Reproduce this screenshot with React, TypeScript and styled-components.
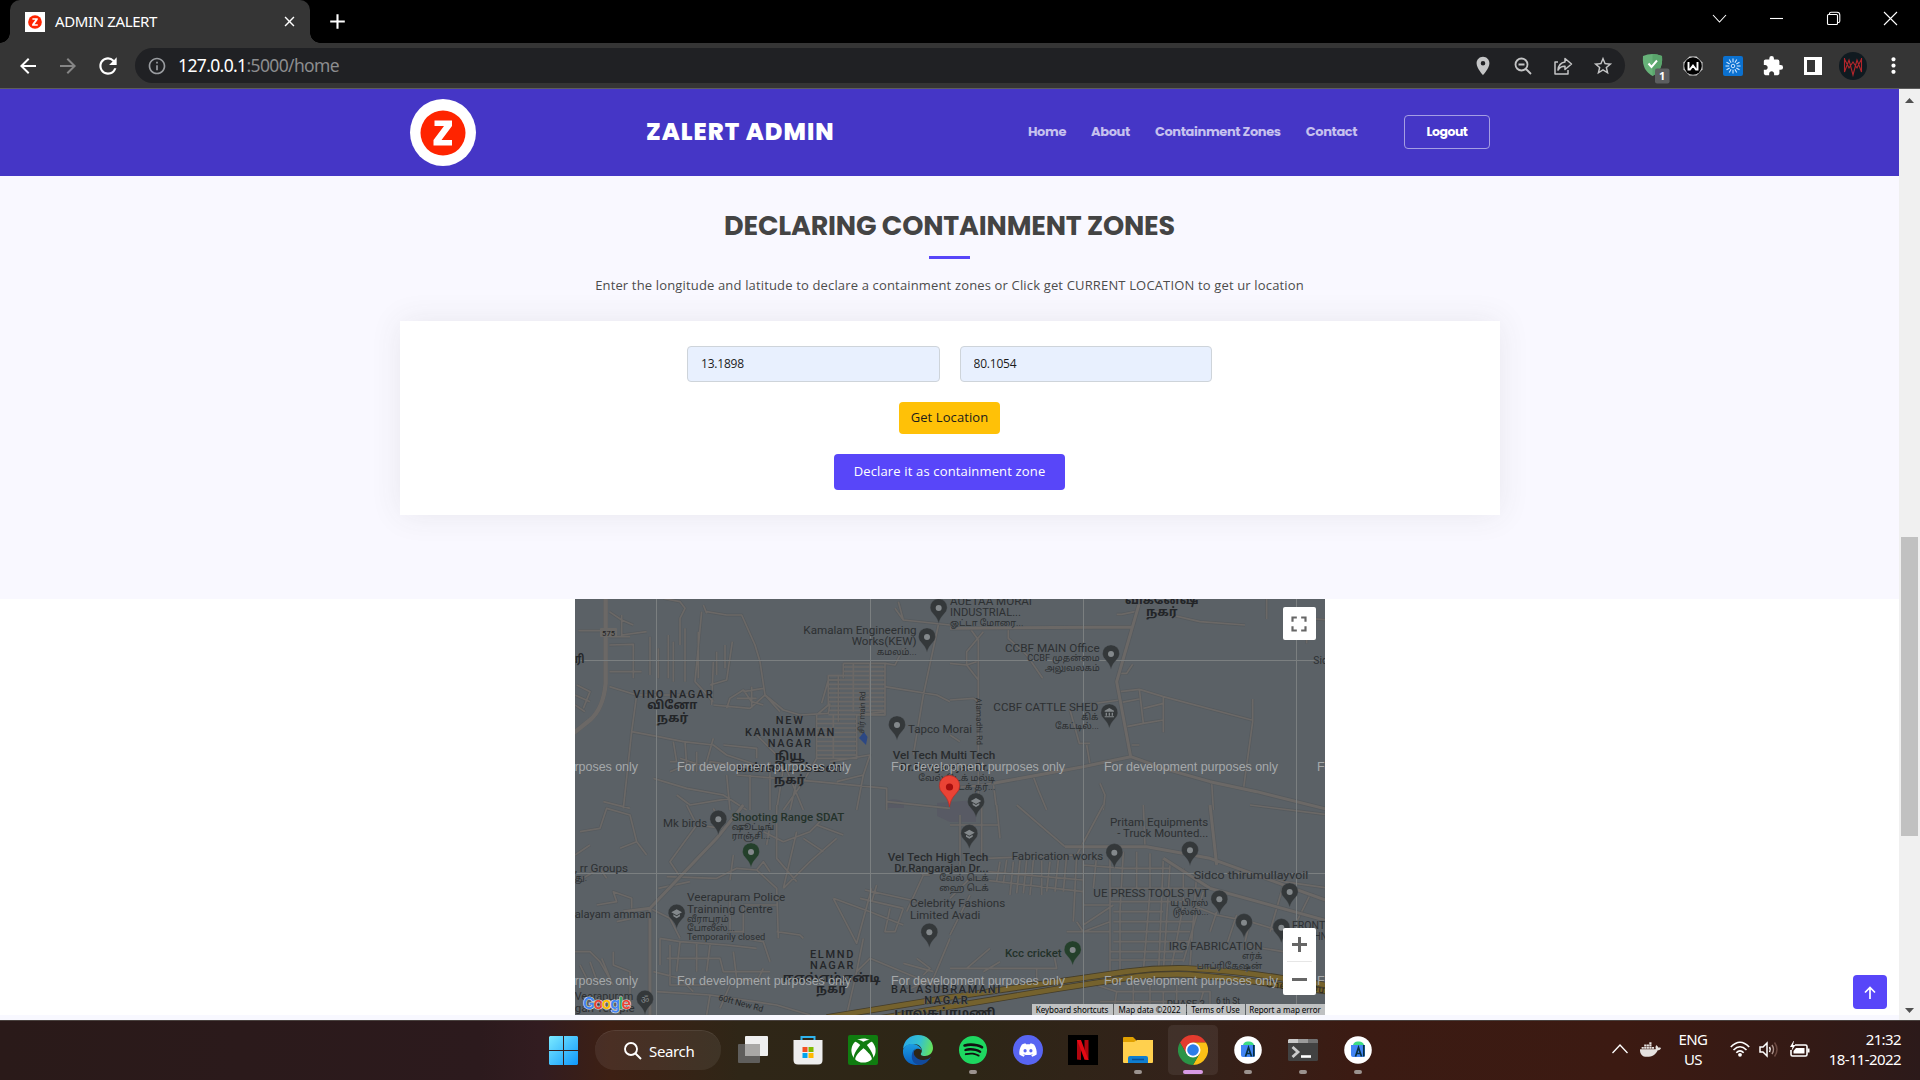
import React from "react";
import styled, { createGlobalStyle } from "styled-components";
import {
  MdArrowBack,
  MdArrowForward,
  MdRefresh,
  MdInfoOutline,
  MdLocationOn,
  MdStarBorder,
  MdExtension,
  MdMoreVert,
  MdClose,
  MdAdd,
  MdFullscreen,
} from "react-icons/md";
import { FaSpotify, FaDiscord, FaXbox, FaDocker } from "react-icons/fa";

const ui = `"Segoe UI", "Noto Sans", "Open Sans", sans-serif`;
const heading = `Poppins, Inter, "Liberation Sans", sans-serif`;
const body = `"Open Sans", "Noto Sans", sans-serif`;

const GlobalStyle = createGlobalStyle`
  * { box-sizing: border-box; }
  body { margin: 0; background: #000; overflow: hidden; }
  button { font: inherit; border: 0; padding: 0; margin: 0; background: none; }
  svg { display: block; flex: none; }
`;

const Screen = styled.div`
  width: 1920px;
  height: 1080px;
  display: flex;
  flex-direction: column;
  font-family: ${ui};
`;

/* ---------- browser chrome ---------- */

const TabStrip = styled.div`
  height: 43px;
  flex: none;
  display: flex;
  background: #000;
  color: #fff;
`;

const Tab = styled.div`
  position: relative;
  width: 300px;
  margin-left: 10px;
  padding: 0 12px 0 15px;
  display: flex;
  align-items: center;
  background: #353535;
  border-radius: 10px 10px 0 0;
  &::before,
  &::after {
    content: "";
    position: absolute;
    bottom: 0;
    width: 10px;
    height: 10px;
  }
  &::before {
    left: -10px;
    background: radial-gradient(circle at 0 0, transparent 9.5px, #353535 10px);
  }
  &::after {
    right: -10px;
    background: radial-gradient(circle at 100% 0, transparent 9.5px, #353535 10px);
  }
`;

const Favicon = styled.div`
  width: 20px;
  height: 20px;
  margin-right: 10px;
  background: #fff;
  display: grid;
  place-items: center;
`;

const TabTitle = styled.span`
  flex: 1;
  font-size: 15px;
  letter-spacing: -0.38px;
  line-height: 20px;
  padding-bottom: 2px;
`;

const NewTab = styled.div`
  width: 24px;
  margin-left: 15px;
  display: grid;
  place-items: center;
`;

const WindowControls = styled.div`
  margin-left: auto;
  margin-right: 1px;
  display: flex;
  height: 37px;
`;

const WinButton = styled.div`
  width: 57px;
  display: grid;
  place-items: center;
`;

const Toolbar = styled.div`
  height: 46px;
  flex: none;
  display: flex;
  align-items: center;
  background: #353535;
  border-bottom: 1px solid #5d5d5d;
  color: #fff;
`;

const NavButtons = styled.div`
  width: 135px;
  padding-left: 7.5px;
  display: flex;
`;

const ToolButton = styled.div<{ $dim?: boolean }>`
  width: 40px;
  height: 40px;
  display: grid;
  place-items: center;
  color: ${(p) => (p.$dim ? "#868686" : "#fff")};
`;

const Omnibox = styled.div`
  width: 1490px;
  height: 35px;
  border-radius: 18px;
  background: #202124;
  display: flex;
  align-items: center;
  padding: 0 2px 0 12px;
  color: #9a9da1;
`;

const Url = styled.span`
  flex: 1;
  padding-left: 11px;
  padding-bottom: 1px;
  font-size: 17.5px;
  line-height: 24px;
  letter-spacing: -0.63px;
  color: #8c8d8f;
  b {
    font-weight: 400;
    color: #fff;
  }
`;

const OmniIcon = styled.div`
  width: 40px;
  display: grid;
  place-items: center;
  color: #c4c5c6;
`;

const Extensions = styled.div`
  display: flex;
  margin-left: 8px;
`;

const Avatar = styled.div`
  width: 28px;
  height: 28px;
  border-radius: 50%;
  background: #101a20;
  display: grid;
  place-items: center;
`;

/* ---------- page ---------- */

const Viewport = styled.div`
  height: 931px;
  flex: none;
  display: flex;
  background: #fff;
`;

const Page = styled.div`
  width: 1899px;
  height: 931px;
  position: relative;
  display: flex;
  flex-direction: column;
`;

const Scrollbar = styled.div`
  width: 21px;
  background: #f0f0f0;
  display: flex;
  flex-direction: column;
  align-items: center;
  padding: 9px 0 7px;
`;

const Thumb = styled.div`
  width: 17px;
  height: 299px;
  margin-top: 434px;
  margin-bottom: auto;
  background: #c1c1c1;
`;

const Header = styled.header`
  height: 87px;
  flex: none;
  padding: 0 409px 2px 410px;
  display: flex;
  align-items: center;
  background: #4536c6;
  font-family: ${heading};
  font-weight: 600;
`;

const Logo = styled.div`
  width: 66px;
  height: 67px;
  margin-top: 2px;
  border-radius: 50%;
  background: #fff;
  display: grid;
  place-items: center;
`;

const Brand = styled.h1`
  margin: 0 0 0 170px;
  width: 382px;
  font-size: 24px;
  line-height: 30px;
  font-weight: 800;
  letter-spacing: 1px;
  white-space: nowrap;
  color: #fff;
`;

const Nav = styled.nav`
  display: flex;
  flex: 1;
  gap: 25px;
  font-size: 13px;
  line-height: 20px;
  font-weight: 700;
  letter-spacing: -0.38px;
  white-space: nowrap;
  color: #c6c1ee;
`;

const Logout = styled.button`
  width: 86px;
  height: 34px;
  border: 1px solid #a59ee3;
  border-radius: 4px;
  color: #fff;
  font-size: 12.5px;
  font-weight: 700;
  letter-spacing: -0.5px;
`;

const Declare = styled.section`
  height: 423px;
  flex: none;
  background: #f9f8ff;
  display: flex;
  flex-direction: column;
  align-items: center;
`;

const Title = styled.h2`
  margin: 33px 0 0;
  font-family: ${heading};
  font-size: 27px;
  line-height: 34px;
  font-weight: 700;
  letter-spacing: -0.2px;
  color: #444;
  white-space: nowrap;
`;

const Rule = styled.div`
  width: 41px;
  height: 3px;
  margin: 13px 0 16px;
  background: #5846f9;
`;

const Lead = styled.p`
  margin: 0;
  font-family: ${body};
  font-size: 13px;
  line-height: 20px;
  letter-spacing: 0.155px;
  color: #4c4c4c;
  white-space: nowrap;
`;

const Card = styled.form`
  width: 1100px;
  height: 194px;
  margin-top: 26px;
  padding-top: 25px;
  display: flex;
  flex-direction: column;
  align-items: center;
  gap: 20px;
  background: #fff;
  box-shadow: 0 0 30px rgba(68, 68, 68, 0.09);
  font-family: ${body};
`;

const Fields = styled.div`
  display: flex;
  gap: 20px;
`;

const Field = styled.input`
  width: 252.5px;
  height: 36px;
  padding: 0 13px 2px;
  border: 1px solid #ced4da;
  border-radius: 4px;
  background: #e8f0fe;
  font: 12px ${body};
  letter-spacing: -0.2px;
  color: #1c1c1c;
`;

const Button = styled.button<{ $primary?: boolean }>`
  width: ${(p) => (p.$primary ? 231 : 101)}px;
  height: ${(p) => (p.$primary ? 36 : 32)}px;
  padding-bottom: 2px;
  border-radius: 4px;
  background: ${(p) => (p.$primary ? "#5846f9" : "#ffc107")};
  color: ${(p) => (p.$primary ? "#fff" : "#1c1c1c")};
  font-size: 13px;
  letter-spacing: ${(p) => (p.$primary ? 0.15 : 0.1)}px;
  white-space: nowrap;
`;

const MapBand = styled.div`
  height: 416px;
  display: flex;
  justify-content: center;
`;

const MapFrame = styled.div`
  position: relative;
  width: 750px;
  height: 416px;
  overflow: hidden;
  background: #5b6166;
`;

const MapControl = styled.div<{ $top: number; $height: number }>`
  position: absolute;
  right: 9px;
  top: ${(p) => p.$top}px;
  width: 33px;
  height: ${(p) => p.$height}px;
  border-radius: 2px;
  background: #fff;
  color: #666;
  display: flex;
  flex-direction: column;
  align-items: center;
  justify-content: center;
  gap: 9.5px;
`;

const Divider = styled.i`
  width: 25px;
  height: 1px;
  background: #e6e6e6;
`;

const Legal = styled.div`
  position: absolute;
  right: 0;
  bottom: 0;
  height: 11px;
  display: flex;
  gap: 1px;
  font: 8px/11px "Noto Sans", sans-serif;
  color: #000;
`;

const LegalItem = styled.span<{ $w: number }>`
  width: ${(p) => p.$w}px;
  text-align: center;
  white-space: nowrap;
  letter-spacing: -0.04px;
  background: #bfc1c2;
`;

const Footer = styled.div`
  height: 5px;
  background: #f8f8ff;
`;

const BackToTop = styled.button`
  position: absolute;
  right: 12px;
  bottom: 11px;
  width: 34px;
  height: 34px;
  border-radius: 4px;
  background: #5846f9;
  display: grid;
  place-items: center;
`;

/* ---------- taskbar ---------- */

const Taskbar = styled.footer`
  height: 60px;
  flex: none;
  display: flex;
  align-items: center;
  padding-left: 549px;
  color: #fff;
  border-top: 1px solid #49413e;
  background: linear-gradient(
    90deg,
    #2a1a19 0,
    #2c1a1d 480px,
    #321c20 540px,
    #3d2014 610px,
    #2f2617 740px,
    #2d2616 960px,
    #33221a 1180px,
    #3b1b13 1350px,
    #3c1a12 1620px,
    #341a15 1800px,
    #2c1a1a 1920px
  );
`;

const SearchPill = styled.div`
  width: 126px;
  height: 40px;
  margin: 0 7px 1px 17px;
  border-radius: 20px;
  background: rgba(255, 255, 255, 0.07);
  border-top: 1px solid rgba(255, 255, 255, 0.08);
  display: flex;
  align-items: center;
  padding-left: 29px;
  gap: 7px;
  font-size: 15px;
  letter-spacing: -0.35px;
`;

const Apps = styled.div`
  display: flex;
  gap: 5px;
  padding-bottom: 1px;
`;

const AppTile = styled.div<{ $active?: boolean }>`
  width: 50px;
  height: 50px;
  border-radius: 5px;
  display: flex;
  flex-direction: column;
  align-items: center;
  padding-top: 10px;
  background: ${(p) => (p.$active ? "rgba(255,255,255,0.07)" : "transparent")};
`;

const Indicator = styled.i<{ $active?: boolean }>`
  width: ${(p) => (p.$active ? 20 : 8)}px;
  height: 4px;
  margin-top: 5px;
  border-radius: 2px;
  background: ${(p) => (p.$active ? "#d79be5" : "#9b938f")};
`;

const Tray = styled.div`
  margin-left: auto;
  display: flex;
  align-items: center;
  padding: 0 19px 3px 0;
  font-size: 15px;
  line-height: 20px;
  letter-spacing: -0.6px;
`;

const TraySlot = styled.div<{ $w: number; $end?: boolean }>`
  width: ${(p) => p.$w}px;
  display: flex;
  flex-direction: column;
  align-items: ${(p) => (p.$end ? "flex-end" : "center")};
  white-space: nowrap;
`;

/* ---------- map drawing ---------- */

const ROAD = "#6b6866";

type Quad = "a" | "b" | "c" | "d";
const origin: Record<Quad, string> = {
  a: "translate(570 595) scale(.33333)",
  b: "translate(950 595) scale(.33333)",
  c: "translate(570 805) scale(.33333)",
  d: "translate(950 805) scale(.33333)",
};

const majorRoads: Record<Quad, string> = {
  a: "M107 0V265Q100 340 60 375L10 415",
  b: "M575 0L500 260L542 485L400 515L130 565M542 485L640 520L780 560L920 590L1140 645M0 100L548 96",
  c: "M0 0M240 630L240 310L330 215L440 100L520 0M240 310L160 320",
  d: "M0 0M345 125H590L780 160L1140 290M640 160L780 250L1140 350M780 0L800 180",
};

const minorRoads: Record<Quad, string> = {
  a: `M25 107H90M118 50L155 75L190 90M155 60V120L230 110M118 125H180M118 150L190 148V250M118 230H215M240 125V240M265 160V250M295 120V250
      M310 140V260M345 100V260M385 110V250M330 70V150M330 70L345 40L330 20L280 10M410 50L470 60H515L555 150L570 200L585 300L630 350
      M395 50L375 260L430 320M400 30L410 55M487 140L470 255L420 270M440 170V240M465 150V220M118 275L200 300H380M200 300L185 410L160 640
      M185 410L265 425L340 440L430 450L470 480L560 510M310 440L320 500H300M345 440L350 510L300 530M430 430L410 500M430 200L425 330
      M430 330L540 340L585 300M470 340L480 310L520 285L545 320L580 330M500 310H560M520 290L580 280M545 275V340M585 300L640 345L690 360L775 355L780 325
      M755 325L775 255H805M820 205H945V360H865M775 240V330L740 360V490H860V360L945 350M820 205V250M805 240V380M945 205L975 210L1000 160
      M975 40L1000 75L1140 90M1000 75L985 20M945 275L1100 300L1140 320M1105 90L1060 300L1030 480M330 490L420 520V500L520 515M250 550L350 580L460 600L530 645
      M320 600L360 630L480 610M460 450L560 460V490M560 420L640 500L700 645M500 540L740 560M600 500V645M640 520L620 645M680 560L660 645
      M740 490L700 560L640 645M780 500L900 480L880 540L800 560M880 540L860 645M740 560L950 580V645M950 620L1140 640M20 270L60 290L40 340
      M15 300L60 320M15 330L45 350M180 640L100 620M470 540L480 645M540 540V645M380 470V530`,
  b: `M0 205L50 210L85 255M50 210L80 200M50 210V170L100 110M85 135V640M0 315L70 310L85 320M85 135L60 100L0 85M175 100V130L230 180L278 250
      M500 58H515L555 50M600 45L750 80L885 90M950 0V72M1000 65L1140 75M1070 60V145M510 290L568 283L640 305L905 375M510 235H530L548 208
      M568 283L580 385L530 395M515 322L568 312M640 305V412M580 340L640 325M580 385L640 375M908 312V380L880 585M545 450H568
      M360 345L388 445H420M410 450L420 508M400 330L510 315M250 545L265 585L290 645M785 560L790 645M450 565L465 600L460 645M130 565L140 645M0 580L130 565M0 420L30 440`,
  c: `M30 80L90 70L110 10L180 30L200 110L230 150M200 110L150 130M20 230L90 190L110 220M15 150L60 120M80 300L140 290L130 260L185 280V340L140 350
      M240 310L300 340L330 400M265 250L360 230M290 215L440 220L500 190L560 195M380 60L300 170L330 215M350 0L380 60L460 70L430 10M580 80L640 110L720 80L780 20
      M600 60L590 120M620 0V160L680 230M680 80L640 250M640 250L720 170L800 100M700 100L760 140M740 60L820 90M560 195L580 170L600 200
      M560 195L620 250L625 400M480 225L490 150M520 300H620M520 300V400L580 410L600 470M480 260V380H520M620 380L690 390L700 400
      M790 280L860 415L905 250M790 280L900 320L1000 360M885 255L1090 300M870 280L1000 310M920 240L905 290M960 310L945 380H975L1000 310
      M1030 180L1060 210H1080M1060 210L1010 320M1140 400L1090 520L1000 560M1040 460L1080 490L1060 510M1000 475L1090 500M860 500L900 460L1140 560
      M270 400L330 410L470 420L560 430M270 400V480M290 460H450L460 500H600M330 410L320 500M380 415V500M420 420L410 500M300 420V540L420 540
      M250 500L330 520L370 560M490 440L500 520L560 530L580 490M15 440H60L90 470L130 540M30 480L60 540M60 470L85 540M95 460L120 520M130 440V480L180 500V600
      M260 560L420 570L620 600L720 630M420 570L410 630M880 400L860 500L830 630M450 610L480 540`,
  d: `M0 60H145M95 0V160M140 0L150 100M30 30V180M0 280L60 220L400 260M110 160L380 150L460 0M200 0L345 125M110 200L400 225M150 170L140 230M170 165L160 235M190 170L180 270
      M210 165L200 265M230 165L220 265M250 165L240 270M275 165V270M300 170L290 260M325 165L315 260M350 150L340 260M380 150L370 350M400 180L520 190H660M400 130V360L490 300
      M440 150L430 250M480 150V500M520 140L510 320V500M560 140V250M600 145V260L580 500M640 160L625 520M660 180L640 500M700 190V300L660 510M740 210L720 480
      M400 300H480M480 250H780M480 290H740M490 320H640M490 350H730M490 380H720M490 410H720M480 440H700M480 465H700M380 350L400 380L480 350M350 380H480
      M700 290L800 330L900 350L1000 380M760 260L740 330L700 470M800 320L780 380M860 330L830 420M900 350L880 430M1000 240L960 380M1080 270L1040 350
      M0 490H320L310 440M50 490L120 430M150 470L100 500M0 390L60 270M260 490V540M440 540L500 560H760L740 630M500 560L490 630M550 540V600M600 530V600M640 560V600
      M680 540V630M740 560L780 560V630M450 590H740M580 0L585 125M900 0L1140 30M850 200L1000 230L1140 250M880 420L1000 440`,
};

const watermark = "For development purposes only";

type Kind = "area" | "poi" | "strong" | "park" | "tamil" | "tamilArea";
const kinds: Record<Kind, { size: number; weight: number; fill: string }> = {
  area: { size: 33, weight: 500, fill: "#242629" },
  poi: { size: 33, weight: 400, fill: "#2d3032" },
  strong: { size: 33, weight: 500, fill: "#292c2e" },
  park: { size: 33, weight: 500, fill: "#23322a" },
  tamil: { size: 27, weight: 400, fill: "#2c2f31" },
  tamilArea: { size: 35, weight: 700, fill: "#232528" },
};

/* quadrant, left, baseline, width, kind, text */
type Label = [Quad, number, number, number, Kind, string];
const labels: Label[] = [
  ["a", 190, 308, 238, "area", "VINO NAGAR"],
  ["a", 232, 342, 150, "tamilArea", "வினோ"],
  ["a", 260, 380, 95, "tamilArea", "நகர்"],
  ["a", 617, 387, 82, "area", "NEW"],
  ["a", 525, 422, 268, "area", "KANNIAMMAN"],
  ["a", 593, 457, 130, "area", "NAGAR"],
  ["a", 614, 495, 90, "tamilArea", "நியூ"],
  ["a", 495, 530, 325, "tamilArea", "கன்னியம்மன்"],
  ["a", 612, 566, 94, "tamilArea", "நகர்"],
  ["a", 15, 205, 28, "tamilArea", "ரி"],
  ["a", 700, 116, 340, "poi", "Kamalam Engineering"],
  ["a", 845, 151, 195, "poi", "Works(KEW)"],
  ["a", 920, 180, 120, "tamil", "கமலம்..."],
  ["a", 1014, 413, 192, "poi", "Tapco Morai"],
  ["a", 968, 492, 308, "strong", "Vel Tech Multi Tech"],
  ["a", 990, 528, 286, "strong", "Dr.Rangarajan Dr..."],
  ["a", 1045, 557, 230, "tamil", "வேல் டெக் மல்டி"],
  ["a", 1140, 585, 136, "tamil", "டெக் தர்..."],
  ["b", 0, 29, 246, "poi", "AUETAA MORAI"],
  ["b", 0, 63, 213, "poi", "INDUSTRIAL..."],
  ["b", 0, 92, 220, "tamil", "ஓட்டா மோரை..."],
  ["b", 525, 28, 220, "tamilArea", "விக்னேஷ்"],
  ["b", 588, 62, 95, "tamilArea", "நகர்"],
  ["b", 165, 171, 284, "poi", "CCBF MAIN Office"],
  ["b", 232, 199, 217, "tamil", "CCBF முதன்மை"],
  ["b", 284, 227, 165, "tamil", "அலுவலகம்"],
  ["b", 130, 348, 315, "poi", "CCBF CATTLE SHED"],
  ["b", 394, 374, 51, "tamil", "கிக்"],
  ["b", 315, 402, 132, "tamil", "கேட்டில்..."],
  ["b", 1090, 206, 60, "poi", "Sidh"],
  ["c", 279, 65, 133, "poi", "Mk birds"],
  ["c", 485, 48, 338, "park", "Shooting Range SDAT"],
  ["c", 485, 75, 128, "tamil", "ஷூட்டிங்"],
  ["c", 485, 103, 116, "tamil", "ராஞ்சி..."],
  ["c", 14, 200, 160, "poi", ", rr Groups"],
  ["c", 15, 228, 36, "tamil", "து."],
  ["c", 351, 288, 295, "poi", "Veerapuram Police"],
  ["c", 351, 323, 257, "poi", "Trainning Centre"],
  ["c", 351, 350, 125, "tamil", "வீராபுரம்"],
  ["c", 351, 377, 144, "tamil", "போலீஸ்..."],
  ["c", 351, 404, 235, "tamil", "Temporarily closed"],
  ["c", 14, 340, 230, "poi", "alayam amman"],
  ["c", 953, 168, 302, "strong", "Vel Tech High Tech"],
  ["c", 973, 202, 283, "strong", "Dr.Rangarajan Dr..."],
  ["c", 1108, 229, 148, "tamil", "வேல் டெக்"],
  ["c", 1108, 257, 148, "tamil", "ஹை டெக்"],
  ["c", 1020, 307, 286, "poi", "Celebrity Fashions"],
  ["c", 1020, 342, 211, "poi", "Limited Avadi"],
  ["c", 720, 458, 130, "area", "ELMND"],
  ["c", 720, 493, 130, "area", "NAGAR"],
  ["c", 638, 530, 294, "tamilArea", "ஈஎல்எம்என்டி"],
  ["c", 738, 564, 92, "tamilArea", "நகர்"],
  ["c", 14, 585, 176, "poi", "Veerapuram"],
  ["c", 14, 620, 180, "poi", "gan Temple"],
  ["c", 963, 563, 328, "area", "BALASUBRAMANI"],
  ["c", 1063, 598, 130, "area", "NAGAR"],
  ["c", 973, 635, 304, "tamilArea", "பாலசுப்ரமணி"],
  ["d", 480, 63, 295, "poi", "Pritam Equipments"],
  ["d", 502, 97, 273, "poi", "- Truck Mounted..."],
  ["d", 185, 165, 275, "poi", "Fabrication works"],
  ["d", 731, 222, 344, "poi", "Sidco thirumullayvoil"],
  ["d", 430, 277, 346, "poi", "UE PRESS TOOLS PVT"],
  ["d", 661, 304, 114, "tamil", "யு பிரஸ்"],
  ["d", 668, 331, 108, "tamil", "டூல்ஸ்..."],
  ["d", 656, 435, 282, "poi", "IRG FABRICATION"],
  ["d", 876, 463, 61, "tamil", "எர்க்"],
  ["d", 740, 491, 197, "tamil", "பாப்ரிகேஷன்"],
  ["d", 165, 455, 170, "park", "Kcc cricket"],
  ["d", 1026, 372, 100, "poi", "FRONT"],
  ["d", 1075, 406, 75, "poi", "CHNO"],
  ["d", 650, 606, 115, "tamil", "PHASE 2"],
  ["d", 640, 636, 130, "tamil", "பேஸ் 2"],
  ["d", 798, 597, 72, "tamil", "6 th St"],
];

type Glyph = "dot" | "school" | "museum" | "om";
/* quadrant, tip x, tip y, glyph, fill */
const pins: [Quad, number, number, Glyph, string?][] = [
  ["a", 1106, 84, "dot"],
  ["a", 1071, 171, "dot"],
  ["a", 981, 435, "dot"],
  ["b", 483, 222, "dot"],
  ["b", 478, 399, "museum"],
  ["b", 78, 666, "school"],
  ["c", 445, 88, "dot"],
  ["c", 543, 186, "dot", "#24402b"],
  ["c", 320, 370, "school"],
  ["c", 1078, 427, "dot"],
  ["c", 225, 628, "om"],
  ["d", 58, 131, "school"],
  ["d", 493, 188, "dot"],
  ["d", 720, 181, "dot"],
  ["d", 1019, 306, "dot"],
  ["d", 808, 328, "dot"],
  ["d", 882, 398, "dot"],
  ["d", 994, 413, "dot"],
  ["d", 368, 480, "dot", "#24402b"],
];

const PinMark = ({ x, y, glyph, fill = "#34383a" }: { x: number; y: number; glyph: Glyph; fill?: string }) => (
  <g transform={`translate(${x} ${y + 1})`}>
    <path
      d="M0 0C-3 -13 -9 -20 -16 -28A25.500 25.500 0 1 1 16 -28C9 -20 3 -13 0 0Z"
      fill={fill}
      stroke="#5b6166"
      strokeWidth="1"
    />
    {glyph === "dot" && <circle cy="-46" r="9" fill="#83888b" />}
    {glyph === "school" && <path d="M-16 -49L0 -58L16 -49L0 -40ZM-10 -43L0 -37L10 -43V-37L0 -31L-10 -37Z" fill="#83888b" />}
    {glyph === "museum" && <path d="M-14 -53L0 -61L14 -53V-50H-14ZM-11 -47H-7V-38H-11ZM-2 -47H2V-38H-2ZM7 -47H11V-38H7ZM-14 -36H14V-33H-14Z" fill="#83888b" />}
    {glyph === "om" && <text y="-36" fontSize="28" textAnchor="middle" fill="#83888b">ॐ</text>}
  </g>
);

const quads: Quad[] = ["a", "b", "c", "d"];

const MapDrawing = () => (
  <svg width="750" height="416" viewBox="575 599 750 416" fontFamily={`Roboto, "Noto Sans Tamil", "Noto Sans", sans-serif`}>
    <rect x="575" y="599" width="750" height="416" fill="#5b6166" />
    <path d="M886 801Q895 797 904 802V808H886ZM937 803L976 800V822H950L937 816Z" fill="#585a64" />
    {quads.map((q) => (
      <g key={q} transform={origin[q]} fill="none" strokeLinejoin="round">
        <path d={minorRoads[q]} stroke="#555a5e" strokeWidth="9" />
        <path d={minorRoads[q]} stroke={ROAD} strokeWidth="5" />
        <path d={majorRoads[q]} stroke="#555a5e" strokeWidth="13" />
        <path d={majorRoads[q]} stroke={ROAD} strokeWidth={q === "a" ? 13 : 9} />
      </g>
    ))}
    <g transform={origin.a} stroke={ROAD} strokeWidth="5">
      {Array.from({ length: 12 }, (_, i) => (
        <path key={i} d={`M${i < 2 ? 820 : 775} ${216 + i * 13}H945`} />
      ))}
      {Array.from({ length: 9 }, (_, i) => (
        <path key={i} d={`M740 ${372 + i * 13.500}H860`} />
      ))}
      <path d="M850 205V350M900 205V350M790 360V490" />
    </g>
    <g transform={origin.d} fill="none">
      {["M-370 637L0 577L530 500Q620 488 710 490Q850 496 1000 520L1140 542", "M-240 645L0 605L330 550L560 515Q640 506 720 509Q860 520 1000 542L1140 560"].map((d) => (
        <g key={d}>
          <path d={d} stroke="#453d28" strokeWidth="19" />
          <path d={d} stroke="#75622d" strokeWidth="14" />
        </g>
      ))}
    </g>
    <path d="M656.500 599V1015M870.500 599V1015M1083.500 599V1015M1296.500 599V1015M575 660.500H1325M575 873.500H1325" stroke="#7b7f80" strokeWidth="1" />
    <rect x="600" y="628" width="17" height="9" rx="1" fill="#6a6866" />
    <text x="602" y="635.500" fontSize="7.500" textLength="13" fill="#1e2022">575</text>
    <path d="M859 738L864 732L867.500 737L866 745Z" fill="#2c4884" />
    <text transform="translate(864 734) rotate(-88)" fontSize="8" textLength="42" fill="#2c2f31">சிர் main Rd</text>
    <text transform="translate(976 698) rotate(89)" fontSize="8" textLength="47" fill="#2c2f31">Alamadhi Rd</text>
    <text transform="translate(718 1000) rotate(15)" fontSize="8.500" textLength="46" fill="#26292b">60ft New Rd</text>
    <text transform="translate(1266 987) rotate(6)" fontSize="10" textLength="62" fill="#26251f">Chennai Out</text>
    {pins.map(([q, x, y, glyph, fill]) => (
      <g key={`${q}${x}`} transform={origin[q]}>
        <PinMark x={x} y={y} glyph={glyph} fill={fill} />
      </g>
    ))}
    {labels.map(([q, x, y, w, kind, text]) => (
      <g key={`${q}${x}-${y}`} transform={origin[q]}>
        <text
          x={x}
          y={y}
          textLength={w}
          lengthAdjust={kind === "area" ? "spacing" : "spacingAndGlyphs"}
          fontSize={kinds[kind].size}
          fontWeight={kinds[kind].weight}
          fill={kinds[kind].fill}
          stroke="#5b6166"
          strokeWidth="3"
          paintOrder="stroke"
        >
          {text}
        </text>
      </g>
    ))}
    <g fontFamily={`"Liberation Sans", sans-serif`} fontSize="12.500" fill="#a5a8aa">
      {[771, 984.5].map((y) =>
        [464, 677, 891, 1104, 1317].map((x) => (
          <text key={`${x}-${y}`} x={x} y={y} textLength="174">{watermark}</text>
        ))
      )}
    </g>
    <g>
      <path d="M949.500 807C948.500 800 946 797 942.500 793A10.200 10.200 0 1 1 956.500 793C953 797 950.500 800 949.500 807Z" fill="#ea4335" stroke="#b92d25" strokeWidth=".8" />
      <circle cx="949.500" cy="787" r="3.600" fill="#a50e0e" />
    </g>
    <text x="583" y="1009" fontSize="16" fontWeight="600" textLength="48" fontFamily="Inter, sans-serif" stroke="#d8dadb" strokeWidth="1.200" paintOrder="stroke">
      <tspan fill="#4285f4">G</tspan><tspan fill="#ea4335">o</tspan><tspan fill="#fbbc05">o</tspan><tspan fill="#4285f4">g</tspan><tspan fill="#34a853">l</tspan><tspan fill="#ea4335">e</tspan>
    </text>
  </svg>
);

/* ---------- small drawings ---------- */

const ZMark = ({ size }: { size: number }) => (
  <svg width={size} height={size} viewBox="0 0 46 46">
    <circle cx="23" cy="23" r="22.500" fill="#ff2400" />
    <path d="M14.500 10.500H32V16L21.500 30H32V35.500H13.500V30L24 16H14.500Z" fill="#fff" />
  </svg>
);

const ShareIcon = () => (
  <svg width="20" height="20" viewBox="0 0 20 20" fill="none" stroke="currentColor" strokeWidth="1.500" strokeLinejoin="round">
    <path d="M5 6H2V18H15V14" />
    <path d="M12 6V2.500L18.500 8L12 13.500V10.200Q7.500 10 5 14Q5.500 7.200 12 6Z" />
  </svg>
);

const ZoomOutIcon = () => (
  <svg width="18" height="18" viewBox="0 0 18 18" fill="none" stroke="currentColor" strokeWidth="1.800">
    <circle cx="7.500" cy="7.500" r="6" />
    <path d="M4.500 7.500H10.500M12 12L17 17" />
  </svg>
);

const Shield = () => (
  <svg width="30" height="30" viewBox="0 0 30 30" overflow="visible">
    <g transform="translate(0 1)">
      <path d="M5 4Q14 0 24 4C25 15 21 20 14.500 24C8 20 4 15 5 4Z" fill="#67b279" />
      <path d="M14.500 2Q19 2 24 4C25 15 21 20 14.500 24Z" fill="#5aa56c" />
      <path d="M10.500 11.500L13.500 15L19 8.500" fill="none" stroke="#fff" strokeWidth="2" />
      <rect x="17" y="16.500" width="14.500" height="15" rx="2" fill="#5c5e60" />
      <text x="24.200" y="28" textAnchor="middle" fontSize="11" fontWeight="700" fontFamily="Noto Sans" fill="#fff">1</text>
    </g>
  </svg>
);

const WIcon = () => (
  <svg width="20" height="20" viewBox="0 0 20 20">
    <path d="M6.500 .5H13.500L19.500 6.500V13.500L13.500 19.500H6.500L.5 13.500V6.500Z" fill="#d8d8d8" />
    <circle cx="10" cy="10" r="8.800" fill="#000" />
    <path d="M5.500 6V13.500H7L10 9.500L13 13.500H14.500V6" fill="none" stroke="#fff" strokeWidth="1.900" />
  </svg>
);

const BurstIcon = () => (
  <svg width="20" height="20" viewBox="0 0 20 20">
    <rect width="20" height="20" rx="2" fill="#0b71d0" />
    {Array.from({ length: 12 }, (_, i) => (
      <path key={i} d="M10 2.500V6.200" stroke="#cfe6ff" strokeWidth="1.100" transform={`rotate(${i * 30} 10 10)`} />
    ))}
    <circle cx="10" cy="10" r="1.800" fill="none" stroke="#cfe6ff" />
  </svg>
);

const Windows = () => (
  <svg width="29" height="29" viewBox="0 0 29 29">
    <defs>
      <linearGradient id="win" x1="0" y1="0" x2="1" y2="1" gradientUnits="objectBoundingBox">
        <stop offset="0" stopColor="#7beaff" />
        <stop offset="1" stopColor="#0f98fb" />
      </linearGradient>
    </defs>
    <path d="M1 0H14V14H0V1ZM15 0H28L29 1V14H15ZM0 15H14V29H1L0 28ZM15 15H29V28L28 29H15Z" fill="url(#win)" />
  </svg>
);

const TaskView = () => (
  <svg width="30" height="30" viewBox="0 0 30 30">
    <rect x="0" y="9" width="22" height="19" rx="1" fill="#5f5e5c" />
    <rect x="7" y="1" width="23" height="20" rx="1" fill="#efefef" />
    <rect x="7" y="9" width="15" height="12" fill="#a9a8a6" />
  </svg>
);

const Store = () => (
  <svg width="30" height="30" viewBox="0 0 30 30">
    <path d="M8.500 7V2H21.500V7" fill="none" stroke="#2fb4ee" strokeWidth="2" />
    <path d="M.5 5H29.500V25Q29.500 29.500 25 29.500H5Q.5 29.500 .5 25Z" fill="#eee" />
    <path d="M9.500 12H14.500V17H9.500Z" fill="#f25022" />
    <path d="M15.500 12H20.500V17H15.500Z" fill="#7fba00" />
    <path d="M9.500 18H14.500V23H9.500Z" fill="#00a4ef" />
    <path d="M15.500 18H20.500V23H15.500Z" fill="#ffb900" />
  </svg>
);

const XboxTile = styled.div`
  width: 30px;
  height: 30px;
  border-radius: 2px;
  background: #107c10;
  color: #fff;
  display: grid;
  place-items: center;
`;

const Edge = () => (
  <svg width="30" height="30" viewBox="0 0 30 30">
    <defs>
      <linearGradient id="edgeTop" x1="0" y1=".3" x2="1" y2=".5">
        <stop offset="0" stopColor="#28a9e8" />
        <stop offset=".55" stopColor="#35c1d0" />
        <stop offset="1" stopColor="#66e35a" />
      </linearGradient>
      <linearGradient id="edgeLeft" x1="0" y1="0" x2="0" y2="1">
        <stop offset="0" stopColor="#1b9de2" />
        <stop offset="1" stopColor="#0a5fc0" />
      </linearGradient>
    </defs>
    <path d="M0 14C1 5 7 0 15 0C24 0 30 6 30 13C30 18 26 21 22 21C18 21 17 19.500 18.500 17.500C20 14 17 9 11 9C5 9 1 12 0 14Z" fill="url(#edgeTop)" />
    <path d="M0 15C1 11 5 8.500 10 9C15 9.500 18 12.500 18.500 15C13 11.500 9.500 16 10.500 20C11.500 25 17 29 20 29C8 33 -1 25 0 15Z" fill="url(#edgeLeft)" />
    <path d="M12.500 13.500C8 17 12 25.500 21 25Q25 25 28 22C25 27 21 30 16 30C10 29 8 24 9 19C9.500 16 11 14.500 12.500 13.500Z" fill="#114a9c" />
  </svg>
);

const Netflix = () => (
  <svg width="30" height="30" viewBox="0 0 30 30">
    <rect width="30" height="30" fill="#000" />
    <path d="M9 5H13V25L9 24.500ZM16.500 5H20.500V25L16.500 24.500Z" fill="#b1060f" />
    <path d="M9 5H13L20.500 25L16.500 24.500Z" fill="#e50914" />
  </svg>
);

const Folder = () => (
  <svg width="30" height="30" viewBox="0 0 30 30">
    <path d="M0 3Q0 2 1 2H10L13 5V10H0Z" fill="#e0a000" />
    <path d="M0 7H11L14 5H30V27Q30 28 29 28H1Q0 28 0 27Z" fill="#ffd04e" />
    <path d="M5 28V23Q5 21 7 21H23Q25 21 25 23V28Z" fill="#0f7ed0" />
    <path d="M9 24.500H21" stroke="#0a4f94" strokeWidth="1.500" />
  </svg>
);

const Chrome = () => (
  <svg width="30" height="30" viewBox="0 0 30 30">
    <path d="M2 7.500A15 15 0 0 1 28 7.500H15L8.500 18.700Z" fill="#e33b2e" />
    <path d="M28 7.500A15 15 0 0 1 15 30L21.500 18.700L15 7.500Z" fill="#fbc116" />
    <path d="M2 7.500A15 15 0 0 0 15 30L21.500 18.700H8.500Z" fill="#2a9446" />
    <circle cx="15" cy="15" r="7.500" fill="#fff" />
    <circle cx="15" cy="15" r="5.800" fill="#2b7de9" />
  </svg>
);

const AndroidStudio = () => (
  <svg width="30" height="30" viewBox="0 0 30 30">
    <circle cx="15" cy="15" r="13.800" fill="#fff" />
    <path d="M8 10H22V20Q22 22 20 22H10Q8 22 8 20Z" fill="#4285f4" />
    <path d="M10 10Q11 6.300 15 6.500Q20 6 21 10Z" fill="#3ddc84" />
    <path d="M12.500 21.500L15.500 12.500L18.500 21.500M13.500 18.500H17.500M20.800 10V21.500" fill="none" stroke="#073042" strokeWidth="1.700" />
  </svg>
);

const Terminal = () => (
  <svg width="30" height="30" viewBox="0 0 30 30">
    <rect y="4" width="30" height="22" rx="1.500" fill="#424242" />
    <path d="M1 4H10V8H0V5Z" fill="#c9c9c9" />
    <path d="M10 4H20V8H10Z" fill="#9a9a9a" />
    <path d="M20 4H29L30 5V8H20Z" fill="#707070" />
    <path d="M4.500 12L10 17L4.500 22" fill="none" stroke="#ccc" strokeWidth="2.800" />
    <path d="M13 21.500H23" stroke="#fff" strokeWidth="2.600" />
  </svg>
);

const Spotify = () => (
  <svg width="30" height="30" viewBox="0 0 30 30">
    <circle cx="15" cy="15" r="12" fill="#111" />
    <FaSpotify size={29} x={0.5} y={0.5} color="#1ed760" />
  </svg>
);

const Discord = () => (
  <svg width="30" height="30" viewBox="0 0 30 30">
    <circle cx="15" cy="15" r="15" fill="#5865f2" />
    <FaDiscord size={19} x={5.5} y={5.5} color="#fff" />
  </svg>
);

const apps: { name: string; icon: React.ReactNode; open?: boolean; active?: boolean }[] = [
  { name: "taskview", icon: <TaskView /> },
  { name: "store", icon: <Store /> },
  { name: "xbox", icon: <XboxTile><FaXbox size={25} /></XboxTile> },
  { name: "edge", icon: <Edge /> },
  { name: "spotify", icon: <Spotify />, open: true },
  { name: "discord", icon: <Discord /> },
  { name: "netflix", icon: <Netflix /> },
  { name: "explorer", icon: <Folder />, open: true },
  { name: "chrome", icon: <Chrome />, open: true, active: true },
  { name: "studio", icon: <AndroidStudio />, open: true },
  { name: "terminal", icon: <Terminal />, open: true },
  { name: "studio-2", icon: <AndroidStudio />, open: true },
];

const winIcons = ["M1 4L7.500 11L14 4", "M1 7.500H14", "", "M1 1L14 14M14 1L1 14"];

export default function App() {
  return (
    <Screen>
      <GlobalStyle />
      <TabStrip>
        <Tab>
          <Favicon><ZMark size={14} /></Favicon>
          <TabTitle>ADMIN ZALERT</TabTitle>
          <MdClose size={17} />
        </Tab>
        <NewTab><MdAdd size={25} /></NewTab>
        <WindowControls>
          {winIcons.map((d, i) => (
            <WinButton key={i}>
              <svg width="15" height="15" viewBox="0 0 15 15" fill="none" stroke="#fff" strokeWidth="1.100">
                {d ? <path d={d} /> : <path d="M3.500 3.500V2.500Q3.500 1.200 5 1.200H11Q13.800 1.200 13.800 4V10Q13.800 11.500 12.500 11.500H12M2.500 3.500H10.500Q11.500 3.500 11.500 4.500V12.500Q11.500 13.500 10.500 13.500H2.500Q1.500 13.500 1.500 12.500V4.500Q1.500 3.500 2.500 3.500Z" />}
              </svg>
            </WinButton>
          ))}
        </WindowControls>
      </TabStrip>

      <Toolbar>
        <NavButtons>
          <ToolButton><MdArrowBack size={24} /></ToolButton>
          <ToolButton $dim><MdArrowForward size={24} /></ToolButton>
          <ToolButton><MdRefresh size={26} /></ToolButton>
        </NavButtons>
        <Omnibox>
          <MdInfoOutline size={20} />
          <Url><b>127.0.0.1</b>:5000/home</Url>
          <OmniIcon><MdLocationOn size={22} /></OmniIcon>
          <OmniIcon><ZoomOutIcon /></OmniIcon>
          <OmniIcon><ShareIcon /></OmniIcon>
          <OmniIcon><MdStarBorder size={22} /></OmniIcon>
        </Omnibox>
        <Extensions>
          <ToolButton><Shield /></ToolButton>
          <ToolButton><WIcon /></ToolButton>
          <ToolButton><BurstIcon /></ToolButton>
          <ToolButton><MdExtension size={22} /></ToolButton>
          <ToolButton>
            <svg width="18" height="18" viewBox="0 0 18 18"><path d="M0 0H18V18H0ZM3 3V15H11V3Z" fill="#fff" fillRule="evenodd" /></svg>
          </ToolButton>
          <ToolButton>
            <Avatar>
              <svg width="20" height="22" viewBox="0 0 20 22" fill="none" stroke="#b3262b" strokeWidth="1.100">
                <path d="M1.500 3V17L6 5L10 20L14 5L18.500 17V3M1.500 4L6 13L10 7L14 13L18.500 4" />
              </svg>
            </Avatar>
          </ToolButton>
          <ToolButton><MdMoreVert size={25} /></ToolButton>
        </Extensions>
      </Toolbar>

      <Viewport>
        <Page>
          <Header>
            <Logo><ZMark size={46} /></Logo>
            <Brand>ZALERT ADMIN</Brand>
            <Nav>
              <span>Home</span>
              <span>About</span>
              <span>Containment Zones</span>
              <span>Contact</span>
            </Nav>
            <Logout>Logout</Logout>
          </Header>
          <Declare>
            <Title>DECLARING CONTAINMENT ZONES</Title>
            <Rule />
            <Lead>Enter the longitude and latitude to declare a containment zones or Click get CURRENT LOCATION to get ur location</Lead>
            <Card>
              <Fields>
                <Field defaultValue="13.1898" />
                <Field defaultValue="80.1054" />
              </Fields>
              <Button type="button">Get Location</Button>
              <Button type="button" $primary>Declare it as containment zone</Button>
            </Card>
          </Declare>
          <MapBand>
            <MapFrame>
              <MapDrawing />
              <MapControl $top={8} $height={33}><MdFullscreen size={26} /></MapControl>
              <MapControl $top={329} $height={67}>
                <svg width="15" height="15" viewBox="0 0 15 15" stroke="#666" strokeWidth="3"><path d="M0 7.500H15M7.500 0V15" /></svg>
                <Divider />
                <svg width="15" height="15" viewBox="0 0 15 15" stroke="#666" strokeWidth="3"><path d="M0 7.500H15" /></svg>
              </MapControl>
              <Legal>
                <LegalItem $w={81}>Keyboard shortcuts</LegalItem>
                <LegalItem $w={72}>Map data ©2022</LegalItem>
                <LegalItem $w={58}>Terms of Use</LegalItem>
                <LegalItem $w={79}>Report a map error</LegalItem>
              </Legal>
            </MapFrame>
          </MapBand>
          <Footer />
          <BackToTop>
            <svg width="12" height="13" viewBox="0 0 12 13" fill="none" stroke="#fff" strokeWidth="1.700"><path d="M6 13V1.500M1 6.500L6 1.500L11 6.500" /></svg>
          </BackToTop>
        </Page>
        <Scrollbar>
          <svg width="9" height="5" viewBox="0 0 9 5"><path d="M0 5L4.500 0L9 5Z" fill="#505050" /></svg>
          <Thumb />
          <svg width="9" height="5" viewBox="0 0 9 5"><path d="M0 0H9L4.500 5Z" fill="#505050" /></svg>
        </Scrollbar>
      </Viewport>

      <Taskbar>
        <Windows />
        <SearchPill>
          <svg width="18" height="18" viewBox="0 0 18 18" fill="none" stroke="#fff" strokeWidth="1.900"><circle cx="7" cy="7" r="6" /><path d="M11.500 11.500L17 17" /></svg>
          Search
        </SearchPill>
        <Apps>
          {apps.map((app) => (
            <AppTile key={app.name} $active={app.active}>
              {app.icon}
              {app.open && <Indicator $active={app.active} />}
            </AppTile>
          ))}
        </Apps>
        <Tray>
          <TraySlot $w={30}>
            <svg width="16" height="10" viewBox="0 0 16 10" fill="none" stroke="#fff" strokeWidth="1.300"><path d="M.5 9L8 1L15.500 9" /></svg>
          </TraySlot>
          <TraySlot $w={30}><FaDocker size={21} color="#e6e2e0" /></TraySlot>
          <TraySlot $w={56}><span>ENG</span><span>US</span></TraySlot>
          <TraySlot $w={38}>
            <svg width="20" height="16" viewBox="0 0 20 16" fill="none" stroke="#fff" strokeWidth="1.600">
              <path d="M.8 6Q10 -3.500 19.200 6M3.500 9Q10 2.500 16.500 9M6.300 11.800Q10 8 13.700 11.800" />
              <circle cx="10" cy="13.800" r="1.900" fill="#fff" stroke="none" />
            </svg>
          </TraySlot>
          <TraySlot $w={20}>
            <svg width="20" height="17" viewBox="0 0 20 17" fill="none" stroke="#fff" strokeWidth="1.500">
              <path d="M1 6H4L8 2V15L4 11H1ZM10.500 6Q12 8.500 10.500 11" /><path d="M13 4Q16 8.500 13 13" stroke="#a98f88" /><path d="M15.500 1.500Q20.500 8.500 15.500 15.500" stroke="#6c4a42" />
            </svg>
          </TraySlot>
          <TraySlot $w={40}>
            <svg width="21" height="17" viewBox="0 0 21 17" fill="none" stroke="#fff" strokeWidth="1.600">
              <path d="M6 4H16.500Q18 4 18 5.500V13.500Q18 15 16.500 15H3.500Q2 15 2 13.500V9" /><path d="M7 7H15.500V12.500H4.500V10Z" fill="#fff" stroke="none" /><path d="M19.500 7.500V11.500" strokeWidth="2" /><path d="M4.500 0L1 6H3.500L2.500 10L6.500 4H4L5 0Z" fill="#fff" stroke="none" />
            </svg>
          </TraySlot>
          <TraySlot $w={82} $end><span>21:32</span><span>18-11-2022</span></TraySlot>
        </Tray>
      </Taskbar>
    </Screen>
  );
}
